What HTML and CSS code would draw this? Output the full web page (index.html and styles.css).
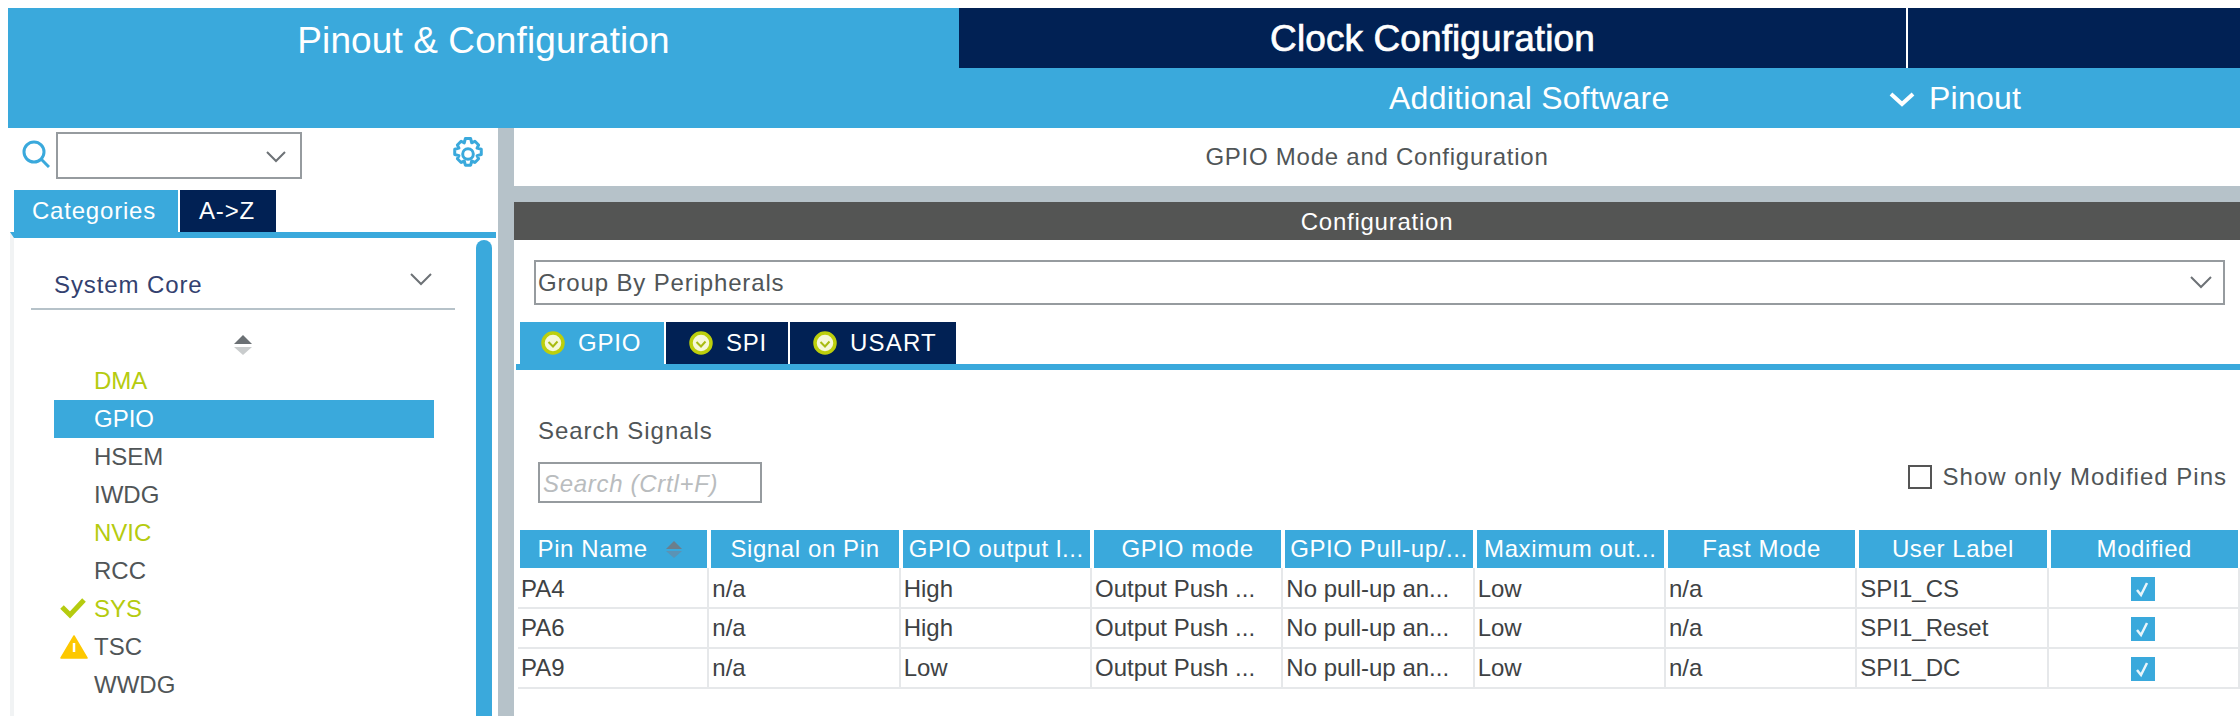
FILE: index.html
```html
<!DOCTYPE html>
<html lang="en">
<head>
    <meta charset="UTF-8">
    <title>Pinout &amp; Configuration</title>
    <link rel="stylesheet" href="styles.css">
</head>
<body>

    <!-- Top navigation -->
    <div class="nav">
        <div class="nav-row">
            <div class="nav-tab nav-active">Pinout &amp; Configuration</div>
            <div class="nav-tab nav-dark nav-clock">Clock Configuration</div>
            <div class="nav-rest"></div>
        </div>
        <div class="nav-row nav-sub">
            <div class="nav-software">Additional Software</div>
            <div class="nav-pinout">
                <svg class="pinout-chevron" width="26" height="16" viewBox="0 0 26 16"><path d="M2 3l11 10L24 3" fill="none" stroke="#fff" stroke-width="4"/></svg>
                Pinout
            </div>
        </div>
    </div>

    <div class="workspace">

        <!-- Left side: categories -->
        <div class="sidebar">
            <div class="side-search">
                <svg class="search-icon" width="28" height="28" viewBox="0 0 28 28"><circle cx="12" cy="12" r="10" fill="none" stroke="#3aa9dc" stroke-width="3"/><path d="M19 19l8 8" stroke="#3aa9dc" stroke-width="3"/></svg>
                <div class="combo">
                    <svg width="20" height="12" viewBox="0 0 20 12"><path d="M1 1l9 9 9-9" fill="none" stroke="#6d7276" stroke-width="2"/></svg>
                </div>
                <svg class="gear-icon" width="34" height="34" viewBox="0 0 32 32">
                    <path d="M13.500 1h5l1 4 3-1.500 3.500 3.500-1.500 3 4 1v5l-4 1 1.500 3-3.500 3.500-3-1.500-1 4h-5l-1-4-3 1.500-3.500-3.500 1.500-3-4-1v-5l4-1-1.500-3 3.500-3.500 3 1.500z" transform="translate(0 .5)" fill="none" stroke="#3aa9dc" stroke-width="2.800" stroke-linejoin="round"/>
                    <circle cx="16" cy="16" r="5" fill="none" stroke="#3aa9dc" stroke-width="2.800"/>
                </svg>
            </div>
            <div class="side-tabs">
                <div class="tab tab-active side-tab-cat">Categories</div>
                <div class="tab side-tab-az">A-&gt;Z</div>
            </div>
            <div class="side-body">
                <div class="side-list">
                    <div class="group-head">
                        <span>System Core</span>
                        <svg width="22" height="13" viewBox="0 0 22 13"><path d="M1 1l10 10L21 1" fill="none" stroke="#6d7276" stroke-width="2"/></svg>
                    </div>
                    <div class="sort-arrows"><span class="arrow-up"></span><span class="arrow-down"></span></div>
                    <div class="item item-ok">DMA</div>
                    <div class="item item-selected">GPIO</div>
                    <div class="item">HSEM</div>
                    <div class="item">IWDG</div>
                    <div class="item item-ok">NVIC</div>
                    <div class="item">RCC</div>
                    <div class="item item-ok">
                        <svg class="item-icon" width="26" height="22" viewBox="0 0 26 22"><path d="M2 10l8 8L24 3" fill="none" stroke="#b5cb0f" stroke-width="5"/></svg>
                        SYS
                    </div>
                    <div class="item">
                        <svg class="item-icon" width="28" height="24" viewBox="0 0 28 24"><path d="M14 1L27 23H1z" fill="#fdc800" stroke="#fdc800" stroke-width="1.500" stroke-linejoin="round"/><path d="M14 8v9" stroke="#fff" stroke-width="2.500"/></svg>
                        TSC
                    </div>
                    <div class="item">WWDG</div>
                </div>
                <div class="scrollbar"></div>
            </div>
        </div>

        <div class="splitter"></div>

        <!-- Right side: GPIO -->
        <div class="main">
            <div class="mode-title">GPIO Mode and Configuration</div>
            <div class="config-bar">Configuration</div>
            <div class="config">
                <div class="group-select">
                    <span>Group By Peripherals</span>
                    <svg width="22" height="13" viewBox="0 0 22 13"><path d="M1 1l10 10L21 1" fill="none" stroke="#6d7276" stroke-width="2"/></svg>
                </div>
                <div class="config-tabs">
                    <div class="tab tab-active tab-gpio"><svg class="tab-icon" width="24" height="24" viewBox="0 0 24 24"><use href="#okmark"/></svg>GPIO</div>
                    <div class="tab tab-spi"><svg class="tab-icon" width="24" height="24" viewBox="0 0 24 24"><use href="#okmark"/></svg>SPI</div>
                    <div class="tab tab-usart"><svg class="tab-icon" width="24" height="24" viewBox="0 0 24 24"><use href="#okmark"/></svg>USART</div>
                </div>
                <div class="filter-row">
                    <div class="filter-left">
                        <div class="filter-label">Search Signals</div>
                        <div class="filter-input">Search (Crtl+F)</div>
                    </div>
                    <div class="modified-only"><span class="empty-box"></span>Show only Modified Pins</div>
                </div>
                <table class="pins">
                    <thead>
                        <tr>
                            <th><span class="pin-head">Pin Name<span class="th-sort"><span class="th-up"></span><span class="th-down"></span></span></span></th>
                            <th>Signal on Pin</th>
                            <th>GPIO output l...</th>
                            <th>GPIO mode</th>
                            <th>GPIO Pull-up/...</th>
                            <th>Maximum out...</th>
                            <th>Fast Mode</th>
                            <th>User Label</th>
                            <th>Modified</th>
                        </tr>
                    </thead>
                    <tbody>
                        <tr>
                            <td>PA4</td><td>n/a</td><td>High</td><td>Output Push ...</td><td>No pull-up an...</td><td>Low</td><td>n/a</td><td>SPI1_CS</td>
                            <td class="cell-check"><svg width="24" height="24" viewBox="0 0 24 24"><use href="#tick"/></svg></td>
                        </tr>
                        <tr>
                            <td>PA6</td><td>n/a</td><td>High</td><td>Output Push ...</td><td>No pull-up an...</td><td>Low</td><td>n/a</td><td>SPI1_Reset</td>
                            <td class="cell-check"><svg width="24" height="24" viewBox="0 0 24 24"><use href="#tick"/></svg></td>
                        </tr>
                        <tr>
                            <td>PA9</td><td>n/a</td><td>Low</td><td>Output Push ...</td><td>No pull-up an...</td><td>Low</td><td>n/a</td><td>SPI1_DC</td>
                            <td class="cell-check"><svg width="24" height="24" viewBox="0 0 24 24"><use href="#tick"/></svg></td>
                        </tr>
                    </tbody>
                </table>
            </div>
        </div>
    </div>

    <!-- shared icons -->
    <svg class="icon-defs" width="0" height="0">
        <symbol id="okmark" viewBox="0 0 24 24">
            <circle cx="12" cy="12" r="10" fill="#f6f8d8" stroke="#bccf0c" stroke-width="3.500"/>
            <path d="M7.500 11l4.500 4.500 4.500-5" fill="none" stroke="#a9bb10" stroke-width="2"/>
        </symbol>
        <symbol id="tick" viewBox="0 0 24 24">
            <rect width="24" height="24" fill="#3aa9dc"/>
            <path d="M6 13l4 5 6-12" fill="none" stroke="#e8f5fb" stroke-width="2.500"/>
        </symbol>
    </svg>

</body>
</html>
```

FILE: styles.css
```css
* {
    box-sizing: border-box;
}
html, body {
    height: 100%;
    overflow: hidden;
}
body {
    display: flex;
    flex-direction: column;
    margin: 8px 0 0 8px;
    height: calc(100vh - 8px);
    background-color: #fff;
    font-family: "Liberation Sans", Arial, sans-serif;
    color: #505557;
}

/* top navigation */
.nav {
    flex: none;
    color: #fff;
    background-color: #3aa9dc;
}
.nav-row {
    display: flex;
    height: 60px;
    align-items: stretch;
}
.nav-tab {
    display: flex;
    align-items: center;
    justify-content: center;
    padding-top: 1px;
    font-size: 37px;
    letter-spacing: 0.1px;
}
.nav-active {
    width: 951px;
    padding-top: 5px;
}
.nav-dark {
    background-color: #012154;
}
.nav-clock {
    width: 949px;
    -webkit-text-stroke: 0.7px #fff;
    border-right: 2px solid #fff;
}
.nav-rest {
    flex: 1;
    background-color: #012154;
}
.nav-sub {
    align-items: center;
    font-size: 32px;
    letter-spacing: 0.25px;
}
.nav-software {
    margin-left: 1381px;
    width: 278px;
    white-space: nowrap;
}
.nav-pinout {
    display: flex;
    align-items: center;
    gap: 14px;
    margin-left: 222px;
}
.pinout-chevron {
    margin-top: 2px;
}

.workspace {
    flex: 1;
    display: flex;
    min-height: 0;
}

/* left side */
.sidebar {
    flex: none;
    width: 490px;
    display: flex;
    flex-direction: column;
}
.side-search {
    display: flex;
    align-items: flex-start;
    height: 62px;
    padding: 4px 0 0 14px;
}
.search-icon {
    margin: 8px 6px 0 0;
}
.combo {
    display: flex;
    align-items: center;
    justify-content: flex-end;
    width: 246px;
    height: 47px;
    padding: 3px 14px 0 0;
    border: 2px solid #969b9f;
}
.gear-icon {
    margin: 5px 0 0 149px;
}
.side-tabs {
    display: flex;
    gap: 2px;
    padding-left: 6px;
}
.tab {
    display: flex;
    align-items: center;
    color: #fff;
    background-color: #012154;
    font-size: 24px;
    letter-spacing: 0.8px;
}
.tab-active {
    background-color: #3aa9dc;
}
.side-tabs .tab {
    height: 42px;
    justify-content: center;
}
.side-tab-cat {
    width: 164px;
    padding-right: 4px;
}
.side-tab-az {
    width: 96px;
    padding-right: 2px;
}
.side-body {
    flex: 1;
    display: flex;
    min-height: 0;
    margin-left: 2px;
    width: 486px;
    border-top: 6px solid #3aa9dc;
    border-left: 4px solid #f1f3f4;
    padding-top: 2px;
}
.side-list {
    flex: 1;
    padding: 0 21px 0 17px;
    min-width: 0;
}
.scrollbar {
    flex: none;
    width: 16px;
    margin-right: 4px;
    border-radius: 8px 8px 0 0;
    background-color: #3aa9dc;
}
.group-head {
    display: flex;
    align-items: center;
    justify-content: space-between;
    height: 70px;
    padding: 22px 15px 0 23px;
    border-bottom: 2px solid #b6c2c9;
    color: #33416f;
    font-size: 24px;
    letter-spacing: 0.9px;
}
.group-head svg {
    margin: -12px 8px 0 0;
}
.sort-arrows {
    display: flex;
    flex-direction: column;
    align-items: center;
    gap: 3px;
    width: 424px;
    padding: 25px 0 0 0;
    height: 52px;
}
.arrow-up, .th-up {
    width: 0;
    height: 0;
    border-left: 9px solid transparent;
    border-right: 9px solid transparent;
    border-bottom: 9px solid #6b7074;
}
.arrow-down, .th-down {
    width: 0;
    height: 0;
    border-left: 9px solid transparent;
    border-right: 9px solid transparent;
    border-top: 8px solid #c9cccd;
}
.item {
    position: relative;
    display: flex;
    align-items: center;
    width: 380px;
    height: 38px;
    margin-left: 23px;
    padding-left: 40px;
    font-size: 24px;
}
.item-ok {
    color: #b5cb0f;
}
.item-selected {
    color: #fff;
    background-color: #3aa9dc;
}
.item-icon {
    position: absolute;
    left: 6px;
    top: 7px;
}

.splitter {
    flex: none;
    width: 16px;
    background-color: #b6c2c9;
}

/* right side */
.main {
    flex: 1;
    display: flex;
    flex-direction: column;
    min-width: 0;
    background-color: #b6c2c9;
}
.mode-title {
    flex: none;
    height: 58px;
    line-height: 58px;
    text-align: center;
    background-color: #fff;
    font-size: 24px;
    letter-spacing: 0.75px;
}
.config-bar {
    flex: none;
    height: 38px;
    margin-top: 16px;
    padding-top: 1px;
    line-height: 38px;
    text-align: center;
    color: #fff;
    background-color: #545554;
    font-size: 24px;
    letter-spacing: 0.75px;
}
.config {
    flex: 1;
    background-color: #fff;
    padding: 20px 0 0 4px;
}
.group-select {
    display: flex;
    align-items: center;
    justify-content: space-between;
    width: 1691px;
    height: 45px;
    margin-left: 16px;
    padding: 0 11px 0 2px;
    border: 2px solid #969b9f;
    font-size: 24px;
    letter-spacing: 0.85px;
}
.config-tabs {
    display: flex;
    gap: 2px;
    height: 48px;
    margin: 17px 0 0 -2px;
    padding-left: 4px;
    border-bottom: 6px solid #3aa9dc;
}
.tab-icon {
    margin-right: 13px;
}
.tab-gpio {
    width: 144px;
    padding-left: 21px;
}
.tab-spi {
    width: 122px;
    padding-left: 23px;
}
.tab-usart {
    width: 166px;
    padding-left: 23px;
    letter-spacing: 1.2px;
}
.filter-row {
    display: flex;
    justify-content: space-between;
    align-items: flex-start;
    height: 160px;
    padding: 0 13px 0 20px;
}
.filter-label {
    margin-top: 47px;
    font-size: 24px;
    letter-spacing: 0.95px;
}
.filter-input {
    width: 224px;
    height: 41px;
    margin-top: 17px;
    padding: 0 3px;
    line-height: 39px;
    border: 2px solid #969b9f;
    color: #b9bcbe;
    font-size: 24px;
    font-style: italic;
    letter-spacing: 0.7px;
    white-space: nowrap;
}
.modified-only {
    display: flex;
    align-items: center;
    gap: 11px;
    margin-top: 93px;
    font-size: 24px;
    letter-spacing: 1px;
}
.empty-box {
    width: 24px;
    height: 24px;
    border: 2px solid #555;
}
.pins {
    width: 100%;
    table-layout: fixed;
    border-collapse: separate;
    border-spacing: 0;
    font-size: 22px;
}
.pins th {
    height: 38px;
    padding: 0;
    border-left: 2px solid #fff;
    border-right: 2px solid #fff;
    color: #fff;
    background-color: #3aa9dc;
    font-weight: 400;
    font-size: 24px;
    letter-spacing: 0.6px;
    text-align: center;
    white-space: nowrap;
    overflow: hidden;
}
.pin-head {
    display: inline-flex;
    align-items: center;
    gap: 18px;
    margin-left: -8px;
}
.th-sort {
    display: inline-flex;
    flex-direction: column;
    gap: 2px;
}
.th-up {
    border-left-width: 8px;
    border-right-width: 8px;
    border-bottom: 8px solid #6b7f8c;
}
.th-down {
    border-left-width: 8px;
    border-right-width: 8px;
    border-top: 7px solid #5b93b5;
}
.pins tbody tr:first-child td {
    height: 41px;
    padding-top: 2px;
}
.pins td {
    height: 40px;
    padding: 0 0 0 3px;
    border-right: 2px solid #e6e8ea;
    border-bottom: 2px solid #e6e8ea;
    color: #3e4244;
    font-size: 24px;
    white-space: nowrap;
    overflow: hidden;
}
.pins td.cell-check {
    padding: 2px 0 0 0;
    text-align: center;
    line-height: 0;
}
.icon-defs {
    position: absolute;
}
```
